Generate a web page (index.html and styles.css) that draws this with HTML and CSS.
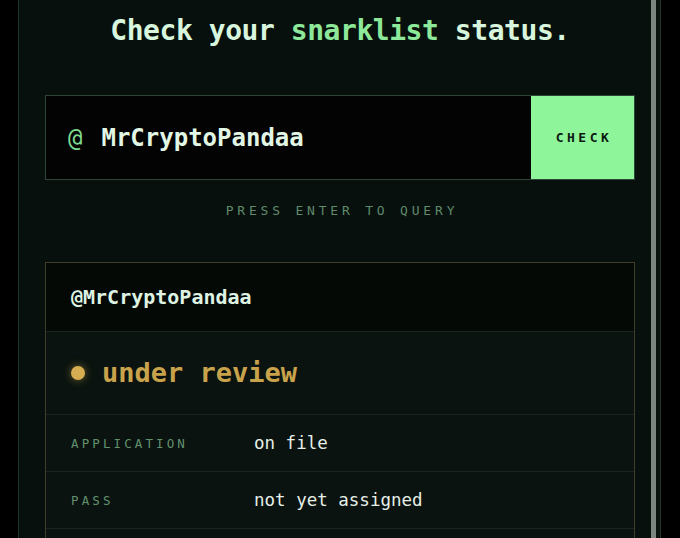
FILE: index.html
```html
<!DOCTYPE html>
<html lang="en">
<head>
<meta charset="utf-8">
<title>snarklist status</title>
<link rel="stylesheet" href="styles.css">
</head>
<body>
<div class="frame">
  <main class="main">
    <h1 class="title">Check your <span class="accent">snarklist</span> status.</h1>
    <form class="query">
      <label class="field">
        <span class="at">@</span>
        <span class="handle">MrCryptoPandaa</span>
      </label>
      <button type="button" class="check">CHECK</button>
    </form>
    <p class="hint">PRESS ENTER TO QUERY</p>
    <section class="card">
      <header class="card-head">@MrCryptoPandaa</header>
      <div class="status"><span class="dot"></span><span class="status-text">under review</span></div>
      <div class="row"><span class="label">APPLICATION</span><span class="value">on file</span></div>
      <div class="row"><span class="label">PASS</span><span class="value">not yet assigned</span></div>
    </section>
  </main>
  <div class="rail"><div class="thumb"></div></div>
</div>
</body>
</html>
```

FILE: styles.css
```css
html, body {
  margin: 0;
  padding: 0;
  height: 538px;
  overflow: hidden;
  background: #000;
}
body {
  font-family: "DejaVu Sans Mono", "Liberation Mono", monospace;
  display: flex;
}
.frame {
  margin-left: 18px;
  width: 641px;
  height: 538px;
  display: flex;
  background: #07100c;
  border-left: 1px solid #1d3529;
  border-right: 1px solid #24382d;
}
.main {
  flex: 1;
  padding: 14px 16px 0 26px;
  display: flex;
  flex-direction: column;
  overflow: hidden;
}
.main > * {
  flex-shrink: 0;
}
.title {
  margin: 0;
  font-size: 28px;
  line-height: 34px;
  letter-spacing: -0.45px;
  font-weight: bold;
  text-align: center;
  color: #d8f6de;
}
.accent { color: #8de89a; }
.query {
  margin: 47px 0 0;
  height: 85px;
  box-sizing: border-box;
  border: 1px solid #2d4636;
  background: #020302;
  display: flex;
}
.field {
  flex: 1;
  display: flex;
  align-items: center;
  padding-left: 22px;
  font-size: 24px;
}
.at {
  color: #7fd88f;
  margin-right: 19px;
}
.handle {
  color: #e2f6e6;
  font-weight: bold;
}
.check {
  width: 103px;
  border: 0;
  margin: 0;
  padding: 0 0 0 3px;
  background: #8ff59a;
  color: #0b1a0f;
  font-family: inherit;
  font-size: 13px;
  font-weight: bold;
  letter-spacing: 3.5px;
}
.hint {
  margin: 23px 0 0;
  font-size: 13px;
  line-height: 16px;
  letter-spacing: 3.8px;
  text-align: center;
  padding-left: 4px;
  color: #5f8a6c;
}
.card {
  margin-top: 43px;
  border: 1px solid #413d2b;
  background: #0a130f;
  padding-bottom: 40px;
}
.card-head {
  height: 68px;
  border-bottom: 1px solid #18261e;
  background: #040906;
  display: flex;
  align-items: center;
  padding-left: 25px;
  font-size: 20px;
  font-weight: bold;
  color: #dff3e3;
}
.status {
  height: 82px;
  border-bottom: 1px solid #18261e;
  display: flex;
  align-items: center;
  padding-left: 25px;
  gap: 17px;
}
.dot {
  width: 14px;
  height: 14px;
  border-radius: 50%;
  background: #d6ad50;
  box-shadow: 0 0 8px rgba(214, 173, 80, 0.55);
}
.status-text {
  font-size: 27px;
  font-weight: bold;
  color: #c9a24c;
  margin-top: -2px;
}
.row {
  height: 56px;
  border-bottom: 1px solid #18261e;
  display: grid;
  grid-template-columns: 183px 1fr;
  align-items: center;
  padding-left: 25px;
}
.label {
  font-size: 12.5px;
  letter-spacing: 3.1px;
  color: #62916f;
}
.value {
  font-size: 17.5px;
  color: #e6efe8;
}
.rail {
  width: 9px;
  display: flex;
  background: #0a120e;
}
.thumb {
  width: 5px;
  background: #7c8681;
}
```
